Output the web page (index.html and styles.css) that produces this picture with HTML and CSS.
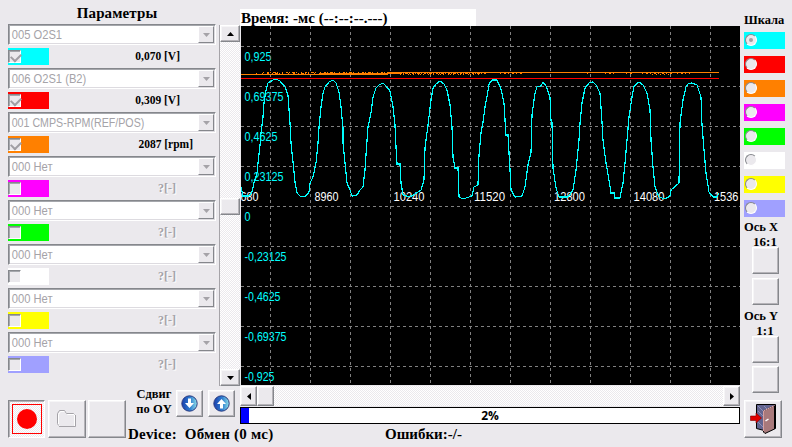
FILE: index.html
```html
<!DOCTYPE html>
<html lang="ru">
<head>
    <meta charset="UTF-8">
    <meta name="viewport" content="width=device-width, initial-scale=1.0">
    <title>Параметры</title>
    <link rel="stylesheet" href="styles.css">
</head>
<body>
    <div class="app">
        <div class="params">
            <h1>Параметры</h1>
            <div class="params-body">
                <div class="param-list">
                    <div class="param">
                        <div class="combo"><span>005 O2S1</span><i class="drop"></i></div>
                        <div class="param-row"><div class="swatch cyan"><i class="check on"></i></div><b class="value">0,070 [V]</b></div>
                    </div>
                    <div class="param">
                        <div class="combo"><span>006 O2S1 (B2)</span><i class="drop"></i></div>
                        <div class="param-row"><div class="swatch red"><i class="check on"></i></div><b class="value">0,309 [V]</b></div>
                    </div>
                    <div class="param">
                        <div class="combo"><span class="wide">001 CMPS-RPM(REF/POS)</span><i class="drop"></i></div>
                        <div class="param-row"><div class="swatch orange"><i class="check on"></i></div><b class="value rpm">2087 [rpm]</b></div>
                    </div>
                    <div class="param">
                        <div class="combo"><span>000 Нет</span><i class="drop"></i></div>
                        <div class="param-row"><div class="swatch magenta"><i class="check"></i></div><b class="value off">?[-]</b></div>
                    </div>
                    <div class="param">
                        <div class="combo"><span>000 Нет</span><i class="drop"></i></div>
                        <div class="param-row"><div class="swatch green"><i class="check"></i></div><b class="value off">?[-]</b></div>
                    </div>
                    <div class="param">
                        <div class="combo"><span>000 Нет</span><i class="drop"></i></div>
                        <div class="param-row"><div class="swatch white"><i class="check"></i></div><b class="value off">?[-]</b></div>
                    </div>
                    <div class="param">
                        <div class="combo"><span>000 Нет</span><i class="drop"></i></div>
                        <div class="param-row"><div class="swatch yellow"><i class="check"></i></div><b class="value off">?[-]</b></div>
                    </div>
                    <div class="param">
                        <div class="combo"><span>000 Нет</span><i class="drop"></i></div>
                        <div class="param-row"><div class="swatch violet"><i class="check"></i></div><b class="value off">?[-]</b></div>
                    </div>
                </div>
                <div class="vscroll">
                    <div class="btn"><svg width="7" height="4"><path d="M0 4L3.5 0L7 4z"/></svg></div>
                    <div class="btn thumb"></div>
                    <div class="btn"><svg width="7" height="4"><path d="M0 0L3.5 4L7 0z"/></svg></div>
                </div>
            </div>
        </div>

        <div class="tools">
            <div class="btn big pressed">
                <svg width="30" height="30"><rect x=".5" y=".5" width="29" height="29" fill="none" stroke="#f00"/><circle cx="15" cy="15" r="10" fill="#f00"/></svg>
            </div>
            <div class="btn big">
                <svg width="20" height="18"><path d="M2.5 16.5L1.5 14.5V4.5L3.5 1.5H8.5L10.5 4.5H17.5V16.5z" fill="none" stroke="#fff"/><path d="M1.5 15.5L.5 13.5V3.5L2.5 .5H7.5L9.5 3.5H16.5L17.5 4.5" fill="none" stroke="#a5a3a8"/><path d="M2 16.5H18.5V5" fill="none" stroke="#a5a3a8"/></svg>
            </div>
            <div class="btn big"></div>
            <div class="shift">Сдвиг<br>по OY</div>
            <div class="btn small">
                <svg width="17" height="17" viewBox="0 0 17 17"><defs><linearGradient id="ball" x1="0" y1="0" x2="1" y2="0"><stop offset="0" stop-color="#1a3fae"/><stop offset=".55" stop-color="#2f7fd0"/><stop offset="1" stop-color="#8fe0e8"/></linearGradient></defs><circle cx="8.5" cy="8.5" r="7.7" fill="url(#ball)" stroke="#2a3a80"/><path d="M7 3.5H10V8H13L8.5 13L4 8H7z" fill="#fff"/></svg>
            </div>
            <div class="btn small second">
                <svg width="17" height="17" viewBox="0 0 17 17"><circle cx="8.5" cy="8.5" r="7.7" fill="url(#ball)" stroke="#2a3a80"/><path d="M7 13.5H10V9H13L8.5 4L4 9H7z" fill="#fff"/></svg>
            </div>
        </div>

        <div class="center">
            <div class="time"><span>Время: -мс (--:--:--.---)</span></div>
            <svg class="chart" width="499" height="359" viewBox="241 26 499 359">
                <rect x="241" y="26" width="499" height="359"/>
                <g class="y-labels">
                    <text x="244.5" y="61" textLength="27" lengthAdjust="spacingAndGlyphs">0,925</text>
                    <text x="244.5" y="101" textLength="39" lengthAdjust="spacingAndGlyphs">0,69375</text>
                    <text x="244.5" y="141" textLength="33" lengthAdjust="spacingAndGlyphs">0,4625</text>
                    <text x="244.5" y="181" textLength="39" lengthAdjust="spacingAndGlyphs">0,23125</text>
                    <text x="244.5" y="221" textLength="6" lengthAdjust="spacingAndGlyphs">0</text>
                    <text x="244.5" y="261" textLength="42" lengthAdjust="spacingAndGlyphs">-0,23125</text>
                    <text x="244.5" y="301" textLength="36" lengthAdjust="spacingAndGlyphs">-0,4625</text>
                    <text x="244.5" y="341" textLength="42" lengthAdjust="spacingAndGlyphs">-0,69375</text>
                    <text x="244.5" y="381" textLength="30" lengthAdjust="spacingAndGlyphs">-0,925</text>
                </g>
                <path class="grid" d="M241 46.5H740M241 86.5H740M241 126.5H740M241 166.5H740M241 206.5H740M241 246.5H740M241 286.5H740M241 326.5H740M241 366.5H740"/>
                <path class="grid" d="M270.5 26V385M310.5 26V385M350.5 26V385M390.5 26V385M430.5 26V385M470.5 26V385M510.5 26V385M550.5 26V385M590.5 26V385M630.5 26V385M670.5 26V385M710.5 26V385"/>
                <g class="x-labels">
                    <text x="240.5" y="201" textLength="18" lengthAdjust="spacingAndGlyphs">680</text>
                    <text x="314.5" y="201" textLength="24" lengthAdjust="spacingAndGlyphs">8960</text>
                    <text x="393.5" y="201" textLength="31" lengthAdjust="spacingAndGlyphs">10240</text>
                    <text x="474" y="201" textLength="31" lengthAdjust="spacingAndGlyphs">11520</text>
                    <text x="554" y="201" textLength="31" lengthAdjust="spacingAndGlyphs">12800</text>
                    <text x="633.5" y="201" textLength="31" lengthAdjust="spacingAndGlyphs">14080</text>
                    <text x="714" y="201" textLength="24.5" lengthAdjust="spacingAndGlyphs">1536</text>
                </g>
                <path class="line-orange" d="M241 74.5H388M320 73.5H400M388 72.5H719"/>
                <path class="ticks" d="M256 73.5H400" stroke-dasharray="1 5 1 4 2 3 1 2 3 1 1 2"/>
                <path class="ticks" d="M263 72.5H400" stroke-dasharray="1 3 2 1 1 2 3 1 1 4"/>
                <path class="ticks" d="M400 73.5H486" stroke-dasharray="2 1 1 1 3 1 1 2"/>
                <path class="ticks" d="M400 74.5H480" stroke-dasharray="1 2 1 4 1 1"/>
                <path class="ticks" d="M500 73.5H524M587 73.5H588M605 73.5H616M626 73.5H633M642 73.5H672M677 73.5H690" stroke-dasharray="1 3 2 2"/>
                <path class="ticks" d="M652 74.5H672" stroke-dasharray="1 3"/>
                <path class="line-red" d="M241 78.5H719"/>
                <polyline class="line-cyan" points="241,187 243,196 249,196 252,192 254,183 257,173 258,163 260,145 261,133 263,117 264,103 266,90 268,83 273,80 276,79 280,81 285,87 288,95 290,123 291,143 293,162 295,182 297,193 301,197 306,196 309,192 310,183 313,177 316,163 318,143 319,127 321,107 323,93 325,87 329,82 333,80 336,83 339,92 341,107 343,128 343,143 345,163 347,183 350,190 352,196 357,195 360,190 363,187 365,170 366,155 368,127 371,113 373,97 376,88 379,85 383,83 386,86 390,91 393,107 395,125 396,147 397,164 400,164 401,183 403,195 410,197 415,194 421,190 424,180 425,148 428,125 431,100 433,88 436,84 440,81 444,84 447,90 450,105 452,127 453,157 455,168 458,168 459,197 463,199 472,196 474,187 478,185 479,155 481,133 483,122 485,107 487,97 489,84 492,80 497,80 501,89 504,103 505,120 506,135 508,135 510,170 511,190 515,197 522,196 525,187 528,165 531,153 532,115 535,93 537,87 541,86 543,82 546,86 550,97 551,121 552,122 553,168 556,188 559,197 568,197 573,190 576,170 579,140 580,123 582,103 585,88 589,83 593,82 596,85 600,93 602,122 603,140 606,163 609,180 611,193 614,193 615,198 620,198 623,183 625,163 627,140 629,117 632,97 634,86 639,82 643,85 647,93 650,110 651,140 653,167 655,187 659,197 665,199 670,196 671,190 679,183 680,123 683,100 686,87 688,84 692,83 697,85 701,97 702,125 704,150 706,173 709,192 713,197 717,197 719,193"/>
            </svg>
            <div class="hscroll">
                <div class="btn"><svg width="4" height="7"><path d="M4 0L0 3.5L4 7z"/></svg></div>
                <div class="btn hthumb"></div>
                <div class="btn last"><svg width="4" height="7"><path d="M0 0L4 3.5L0 7z"/></svg></div>
            </div>
            <div class="progress"><div class="bar" style="width: 8px"></div><b>2%</b></div>
        </div>

        <div class="status">
            <span class="device">Device:&nbsp; Обмен (0 мс)</span>
            <span class="errors">Ошибки:-/-</span>
        </div>

        <div class="side">
            <div class="scale-title">Шкала</div>
            <div class="scale">
                <div class="swatch cyan"><i class="radio on"></i></div>
                <div class="swatch red"><i class="radio"></i></div>
                <div class="swatch orange"><i class="radio"></i></div>
                <div class="swatch magenta"><i class="radio"></i></div>
                <div class="swatch green"><i class="radio"></i></div>
                <div class="swatch white"><i class="radio"></i></div>
                <div class="swatch yellow"><i class="radio"></i></div>
                <div class="swatch violet"><i class="radio"></i></div>
            </div>
            <div class="axis axis-x">
                <div class="axis-name">Ось X</div>
                <div class="axis-ratio">16:1</div>
                <div class="btn small"></div>
                <div class="btn small"></div>
            </div>
            <div class="axis axis-y">
                <div class="axis-name">Ось Y</div>
                <div class="axis-ratio">1:1</div>
                <div class="btn small"></div>
                <div class="btn small"></div>
            </div>
            <div class="btn big exit">
                <svg width="28" height="32" viewBox="0 0 28 32">
                    <path d="M7.5 1.5H26.5V25.5L17 28L7.5 25.5z" fill="#63648f" stroke="#000"/>
                    <path d="M9 3L15 9M9 8L14 13M9 19L14 24M15 3L18 6" stroke="#8b90bb"/>
                    <path d="M14.5 8L25.5 2.5V26L16 30.5L14.5 29z" fill="#a8797b" stroke="#000"/>
                    <path d="M14.5 28V8L25.5 2.5" fill="none" stroke="#d8a0a0"/>
                    <path d="M16.5 18L19.5 16" stroke="#fff" stroke-width="1.5"/>
                    <path d="M1.5 13H7V10L12.5 15L7 20V17.5H1.5z" fill="#e00000" stroke="#800000" stroke-width=".6"/>
                </svg>
            </div>
        </div>
    </div>
</body>
</html>
```
FILE: styles.css
```css
* {
    box-sizing: border-box;
}
body {
    margin: 0;
    background: #ebe9ed;
    color: #000;
    font-family: "Liberation Serif", "Times New Roman", serif;
    font-weight: bold;
    overflow: hidden;
}
svg {
    display: block;
}
.app {
    display: grid;
    grid-template-columns: 240px 500px 52px;
    grid-template-rows: 386px 39px 22px;
    width: 792px;
    height: 447px;
}

/* buttons */
.btn {
    display: flex;
    align-items: center;
    justify-content: center;
    flex: none;
    background: #ebe9ed;
    border: 1px solid;
    border-color: #fff #85878c #85878c #fff;
    box-shadow: inset -1px -1px 0 #b5b3b8, inset 1px 1px 0 #f6f5f7;
}
.btn.big {
    width: 38px;
    height: 38px;
}
.btn.small {
    width: 27px;
    height: 27px;
}
.btn.pressed {
    width: 37px;
    border-color: #85878c #fff #fff #85878c;
    box-shadow: inset 1px 1px 0 #b5b3b8;
}
.btn.pressed, .vscroll, .hscroll {
    background: repeating-conic-gradient(#fff 0 25%, #ebe9ed 0 50%) 0 0 / 2px 2px;
}

/* parameters */
.params {
    grid-column: 1;
    grid-row: 1;
}
h1 {
    height: 24px;
    margin: 0;
    padding: 4px 6px 0 0;
    font-size: 15px;
    line-height: 18px;
    letter-spacing: 0.1px;
    text-align: center;
}
.params-body {
    display: flex;
    justify-content: space-between;
    padding-left: 8px;
}
.param {
    height: 44px;
}
.combo {
    display: flex;
    justify-content: space-between;
    width: 208px;
    height: 21px;
    padding: 1px;
    background: #fff;
    border: 1px solid;
    border-color: #85878c #fff #fff #85878c;
    box-shadow: inset 1px 1px 0 #a5a7ac, inset -1px -1px 0 #dddbe0;
    color: #a5a3a8;
    font: 13px/18px "Liberation Sans", Arial, sans-serif;
}
.combo span {
    padding-left: 2px;
    white-space: nowrap;
    transform: scaleX(0.86);
    transform-origin: 0 0;
}
.combo .wide {
    transform: scaleX(0.82);
}
.drop {
    width: 16px;
    height: 17px;
    background: #ebe9ed;
    border: 1px solid;
    border-color: #fff #85878c #85878c #fff;
    padding: 6px 0 0 4px;
}
.drop::before {
    content: "";
    display: block;
    width: 7px;
    height: 4px;
    background: #a5a3a8;
    clip-path: polygon(0 0, 100% 0, 50% 100%);
}
.param-row {
    display: flex;
    align-items: center;
    justify-content: space-between;
    width: 172px;
    height: 17px;
    margin-top: 3px;
}
.swatch {
    display: flex;
    align-items: center;
    flex: none;
    width: 41px;
    height: 17px;
}
.cyan { background: #00ffff; }
.red { background: #ff0000; }
.orange { background: #ff8000; }
.magenta { background: #ff00ff; }
.green { background: #00ff00; }
.white { background: #ffffff; }
.yellow { background: #ffff00; }
.violet { background: #a0a0ff; }
.check {
    width: 13px;
    height: 13px;
    background: #ebe9ed;
    border: 1px solid;
    border-color: #85878c #fff #fff #85878c;
    box-shadow: inset 1px 1px 0 #a5a7ac;
}
.check.on::before {
    content: "";
    display: block;
    width: 8px;
    height: 5px;
    margin: 2px 0 0 2px;
    border-left: 2px solid #a09ea3;
    border-bottom: 2px solid #a09ea3;
    transform: rotate(-45deg);
}
.value {
    font-size: 11.5px;
    line-height: 17px;
}
.value.rpm {
    margin-right: -13px;
}
.value.off {
    margin-right: 4px;
    color: #a5a3a8;
    font-size: 12px;
    text-shadow: 1px 1px 0 #fff;
}
.vscroll {
    display: flex;
    flex-direction: column;
    justify-content: space-between;
    width: 21px;
    height: 361px;
    margin-top: 1px;
    border-left: 1px solid #a5a3a8;
}
.vscroll .btn {
    height: 17px;
}
.vscroll .thumb {
    margin-top: 2px;
}

/* bottom buttons */
.tools {
    grid-column: 1;
    grid-row: 2 / 4;
    display: flex;
    align-items: flex-start;
    gap: 2px;
    padding: 14px 0 0 8px;
}
.tools .pressed {
    margin-right: 1px;
}
.shift {
    width: 40px;
    margin: -13px 0 0 6px;
    font-size: 12.5px;
    line-height: 15px;
    text-align: center;
}
.tools .small {
    margin: -10px 0 0 3px;
}
.tools .shift + .small {
    margin-left: 0;
}

/* chart */
.center {
    grid-column: 2;
    grid-row: 1 / 3;
    padding-top: 9px;
}
.time {
    width: 236px;
    height: 17px;
    padding-left: 1px;
    background: #fff;
    font-size: 15px;
    line-height: 18px;
    white-space: nowrap;
}
.chart {
    margin-left: 1px;
    shape-rendering: crispEdges;
}
.chart text {
    font: 13px "Liberation Sans", Arial, sans-serif;
}
.y-labels {
    fill: #00ffff;
}
.x-labels {
    fill: #fff;
}
.grid {
    stroke: #808080;
    stroke-dasharray: 3 3;
}
.line-orange, .ticks {
    stroke: #ff8000;
}
.line-red {
    stroke: #ff0000;
}
.line-cyan {
    fill: none;
    stroke: #00ffff;
    stroke-width: 1.2;
}
.hscroll {
    display: flex;
    height: 20px;
    margin-top: 1px;
}
.hscroll .btn {
    width: 17px;
    height: 20px;
}
.hscroll .last {
    margin-left: auto;
}
.progress {
    display: grid;
    height: 17px;
    margin-top: 1px;
    background: #fff;
    border: 1px solid #000;
}
.progress > * {
    grid-area: 1 / 1;
}
.progress b {
    font: bold 12px/15px "Open Sans", sans-serif;
    text-align: center;
}
.bar {
    background: #0000ff;
}

.status {
    grid-column: 1 / 3;
    grid-row: 3;
    display: flex;
    padding-left: 128px;
    font-size: 15px;
    line-height: 18px;
    white-space: nowrap;
}
.device {
    width: 257px;
    letter-spacing: 0.2px;
}

/* right column */
.side {
    grid-column: 3;
    grid-row: 1 / 4;
    padding: 13px 0 0 4px;
}
.scale-title {
    height: 19px;
    font-size: 12.5px;
    line-height: 14px;
}
.scale {
    display: grid;
    gap: 7px;
}
.scale .swatch {
    padding-left: 1px;
}
.radio {
    width: 12px;
    height: 12px;
    margin-bottom: 1px;
    background: #ebe9ed;
    border: 1.5px solid;
    border-color: #85878c #fff #fff #85878c;
    border-radius: 50%;
}
.radio.on::before {
    content: "";
    display: block;
    width: 4px;
    height: 4px;
    margin: 3px 0 0 3px;
    border-radius: 50%;
    background: #a09ea3;
}
.axis {
    font-size: 13px;
    line-height: 13px;
}
.axis-name {
    height: 13px;
    font-size: 12.5px;
    line-height: 11px;
}
.axis-ratio {
    width: 42px;
    height: 12px;
    text-align: center;
}
.axis-x {
    margin-top: 5px;
}
.axis-y {
    margin-top: 6px;
}
.axis .small {
    margin-left: 8px;
}
.axis .small + .small {
    margin-top: 4px;
}
.axis-y .small + .small {
    margin-top: 3px;
}
.exit {
    margin-top: 7px;
}
```
